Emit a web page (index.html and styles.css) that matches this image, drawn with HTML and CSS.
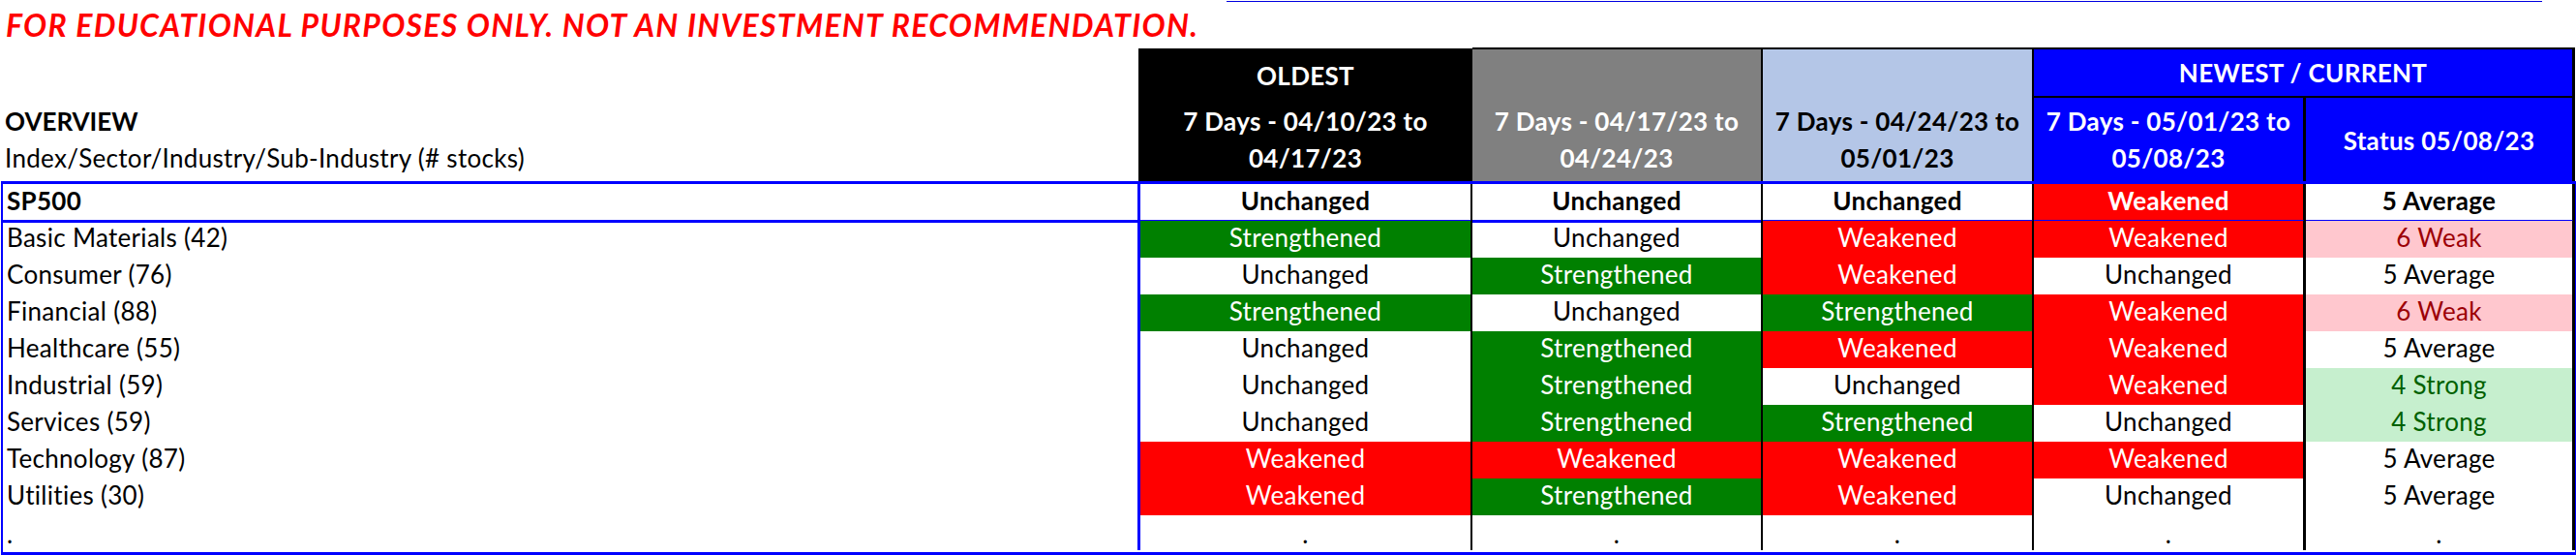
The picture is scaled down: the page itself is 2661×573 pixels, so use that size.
FILE: index.html
```html
<!DOCTYPE html>
<html>
<head>
<meta charset="utf-8">
<link rel="stylesheet" href="styles.css">
</head>
<body>
<div class="topline"></div>
<div class="title">FOR EDUCATIONAL PURPOSES ONLY. NOT AN INVESTMENT RECOMMENDATION.</div>
<div class="head">
  <div class="hlabel">
    <div class="hl-line bold">OVERVIEW</div>
    <div class="hl-line">Index/Sector/Industry/Sub-Industry (# stocks)</div>
  </div>
  <div class="h1 top-black"><div class="oldest">OLDEST</div></div>
  <div class="h2 top-gray"></div>
  <div class="h3 top-lb"></div>
  <div class="h45 top-blue">NEWEST / CURRENT</div>
  <div class="h1 sub-black"><div class="two">7 Days - 04/10/23 to<br>04/17/23</div></div>
  <div class="h2 sub-gray"><div class="two">7 Days - 04/17/23 to<br>04/24/23</div></div>
  <div class="h3 sub-lb"><div class="two">7 Days - 04/24/23 to<br>05/01/23</div></div>
  <div class="h4 sub-blue"><div class="two">7 Days - 05/01/23 to<br>05/08/23</div></div>
  <div class="h5 sub-blue"><div class="two one">Status 05/08/23</div></div>
</div>
<div class="body">
  <div class="lab sp bold">SP500</div>
  <div class="c c1 sp bold">Unchanged</div>
  <div class="c c2 sp bold">Unchanged</div>
  <div class="c c3 sp bold">Unchanged</div>
  <div class="c c4 sp bold r">Weakened</div>
  <div class="c c5 sp bold">5 Average</div>

  <div class="lab">Basic Materials (42)</div>
  <div class="c c1 g">Strengthened</div>
  <div class="c c2">Unchanged</div>
  <div class="c c3 r">Weakened</div>
  <div class="c c4 r">Weakened</div>
  <div class="c c5 pk">6 Weak</div>

  <div class="lab">Consumer (76)</div>
  <div class="c c1">Unchanged</div>
  <div class="c c2 g">Strengthened</div>
  <div class="c c3 r">Weakened</div>
  <div class="c c4">Unchanged</div>
  <div class="c c5">5 Average</div>

  <div class="lab">Financial (88)</div>
  <div class="c c1 g">Strengthened</div>
  <div class="c c2">Unchanged</div>
  <div class="c c3 g">Strengthened</div>
  <div class="c c4 r">Weakened</div>
  <div class="c c5 pk">6 Weak</div>

  <div class="lab">Healthcare (55)</div>
  <div class="c c1">Unchanged</div>
  <div class="c c2 g">Strengthened</div>
  <div class="c c3 r">Weakened</div>
  <div class="c c4 r">Weakened</div>
  <div class="c c5">5 Average</div>

  <div class="lab">Industrial (59)</div>
  <div class="c c1">Unchanged</div>
  <div class="c c2 g">Strengthened</div>
  <div class="c c3">Unchanged</div>
  <div class="c c4 r">Weakened</div>
  <div class="c c5 lg">4 Strong</div>

  <div class="lab">Services (59)</div>
  <div class="c c1">Unchanged</div>
  <div class="c c2 g">Strengthened</div>
  <div class="c c3 g">Strengthened</div>
  <div class="c c4">Unchanged</div>
  <div class="c c5 lg">4 Strong</div>

  <div class="lab">Technology (87)</div>
  <div class="c c1 r">Weakened</div>
  <div class="c c2 r">Weakened</div>
  <div class="c c3 r">Weakened</div>
  <div class="c c4 r">Weakened</div>
  <div class="c c5">5 Average</div>

  <div class="lab">Utilities (30)</div>
  <div class="c c1 r">Weakened</div>
  <div class="c c2 g">Strengthened</div>
  <div class="c c3 r">Weakened</div>
  <div class="c c4">Unchanged</div>
  <div class="c c5">5 Average</div>

  <div class="lab dot">.</div>
  <div class="c c1 dot">.</div>
  <div class="c c2 dot">.</div>
  <div class="c c3 dot">.</div>
  <div class="c c4 dot">.</div>
  <div class="c c5 dot">.</div>
</div>
</body>
</html>
```
FILE: styles.css
```css
* { box-sizing: border-box; }
html, body { margin: 0; padding: 0; background: #fff; }
body {
  width: 2661px;
  font-family: Lato, "Liberation Sans", sans-serif;
  font-size: 26px;
  letter-spacing: 0.3px;
  color: #000;
  overflow: hidden;
}
.bold { font-weight: 700; }

.topline {
  margin: 1px 0 0 1267px;
  width: 1359px;
  height: 1px;
  background: #0000e0;
}
.title {
  height: 47px;
  padding: 6px 0 0 6px;
  line-height: 35px;
  font-size: 32px;
  letter-spacing: 1.3px;
  font-weight: 700;
  font-style: italic;
  color: #ff0000;
  white-space: nowrap;
}

/* header */
.head {
  display: grid;
  grid-template-columns: 1176px 345px 300px 280px 281px 278px 1px;
  grid-template-rows: 52px 86px;
  font-weight: 700;
}
.hlabel {
  grid-column: 1;
  grid-row: 1 / 3;
  display: flex;
  flex-direction: column;
  justify-content: flex-end;
  padding: 0 0 5px 5px;
}
.hl-line { line-height: 38px; white-space: nowrap; }
.hl-line.bold { letter-spacing: 0; }
.hl-line:not(.bold) { font-weight: 400; }

.h1 { grid-column: 2; background: #000; color: #fff; }
.h2 { grid-column: 3; background: #808080; color: #fff; border-right: 2px solid #000; }
.h3 { grid-column: 4; background: #b4c6e7; color: #000; border-right: 2px solid #000; }
.h45 { grid-column: 5 / 7; }
.h4 { grid-column: 5; border-right: 3px solid #000; }
.h5 { grid-column: 6; border-right: 3px solid #000; }

.top-black { grid-row: 1; margin-top: 1px; display: flex; justify-content: center; }
.oldest { line-height: 38px; padding-top: 9px; }
.top-gray, .top-lb { grid-row: 1; border-top: 2px solid #000; }
.top-blue {
  grid-row: 1;
  background: #0000ff;
  color: #fff;
  border-top: 2px solid #000;
  border-bottom: 2px solid #000;
  border-right: 3px solid #000;
  display: flex;
  align-items: center;
  justify-content: center;
  line-height: 38px;
}
.sub-black, .sub-gray, .sub-lb, .sub-blue {
  grid-row: 2;
  display: flex;
  align-items: center;
  justify-content: center;
  text-align: center;
}
.sub-blue { background: #0000ff; color: #fff; }
.two { line-height: 38px; white-space: nowrap; }
.one { padding-top: 2px; }

/* body */
.body {
  margin-left: 1px;
  width: 2660px;
  display: grid;
  grid-template-columns: 1172px 346px 300px 280px 281px 278px;
  grid-auto-rows: 38px;
  border: 3px solid #0000ff;
  border-left-width: 2px;
  border-right-width: 1px;
}
.lab {
  padding-left: 4px;
  line-height: 35px;
  white-space: nowrap;
}
.c {
  text-align: center;
  line-height: 35px;
  white-space: nowrap;
  border-right: 2px solid #000;
}
.c1 { border-left: 3px solid #0000ff; }
.c4, .c5 { border-right-width: 3px; }
.sp {
  height: 40px;
  border-bottom: 3px solid #0000ff;
}
.body .sp { margin-bottom: -2px; }
.dot { height: 36px; line-height: 38px; }

.g { background: #008000; color: #fff; }
.r { background: #ff0000; color: #fff; }
.pk { background: #ffc7ce; color: #9c0006; }
.lg { background: #c6efce; color: #006100; }
```
